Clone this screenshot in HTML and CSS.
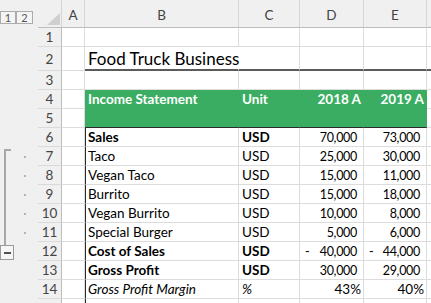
FILE: index.html
```html
<!DOCTYPE html>
<html lang="en">
<head>
    <meta charset="UTF-8">
    <title>Food Truck Business</title>
    <link rel="stylesheet" href="styles.css">
</head>
<body>
<div class="window">
    <!-- outline gutter: level buttons and the group bracket -->
    <div class="gutter">
        <div class="level first">1</div>
        <div class="level">2</div>
        <div class="bracket"></div>
        <div class="dots">
            <span class="dot"></span>
            <span class="dot"></span>
            <span class="dot"></span>
            <span class="dot"></span>
            <span class="dot"></span>
        </div>
        <div class="collapse"><span></span></div>
    </div>

    <div class="sheet">
        <div class="row">
            <div class="cell corner">
                <svg width="13" height="12" viewBox="0 0 13 12"><polygon points="13,0 13,12 0,12" fill="#cfcfcf"/></svg>
            </div>
            <div class="cell col-head">A</div>
            <div class="cell col-head">B</div>
            <div class="cell col-head">C</div>
            <div class="cell col-head">D</div>
            <div class="cell col-head">E</div>
            <div class="cell col-head"></div>
        </div>

        <div class="row">
            <div class="cell row-head">1</div>
            <div class="cell"></div><div class="cell"></div><div class="cell"></div>
            <div class="cell"></div><div class="cell"></div><div class="cell"></div>
        </div>

        <div class="row">
            <div class="cell row-head">2</div>
            <div class="cell"></div>
            <div class="cell title rule">Food Truck Business</div>
            <div class="cell rule"></div><div class="cell rule"></div>
            <div class="cell rule"></div><div class="cell rule"></div>
        </div>

        <div class="row">
            <div class="cell row-head">3</div>
            <div class="cell"></div><div class="cell"></div><div class="cell"></div>
            <div class="cell"></div><div class="cell"></div><div class="cell"></div>
        </div>

        <div class="row">
            <div class="cell row-head">4</div>
            <div class="cell"></div>
            <div class="cell fill">Income Statement</div>
            <div class="cell fill">Unit</div>
            <div class="cell fill right">2018 A</div>
            <div class="cell fill right">2019 A</div>
            <div class="cell"></div>
        </div>

        <div class="row">
            <div class="cell row-head">5</div>
            <div class="cell"></div>
            <div class="cell fill under"></div>
            <div class="cell fill under"></div>
            <div class="cell fill under"></div>
            <div class="cell fill under"></div>
            <div class="cell"></div>
        </div>

        <div class="row">
            <div class="cell row-head">6</div>
            <div class="cell"></div>
            <div class="cell label bold">Sales</div>
            <div class="cell bold">USD</div>
            <div class="cell num">70,000</div>
            <div class="cell num">73,000</div>
            <div class="cell"></div>
        </div>

        <div class="row">
            <div class="cell row-head">7</div>
            <div class="cell"></div>
            <div class="cell label">Taco</div>
            <div class="cell">USD</div>
            <div class="cell num">25,000</div>
            <div class="cell num">30,000</div>
            <div class="cell"></div>
        </div>

        <div class="row">
            <div class="cell row-head">8</div>
            <div class="cell"></div>
            <div class="cell label">Vegan Taco</div>
            <div class="cell">USD</div>
            <div class="cell num">15,000</div>
            <div class="cell num">11,000</div>
            <div class="cell"></div>
        </div>

        <div class="row">
            <div class="cell row-head">9</div>
            <div class="cell"></div>
            <div class="cell label">Burrito</div>
            <div class="cell">USD</div>
            <div class="cell num">15,000</div>
            <div class="cell num">18,000</div>
            <div class="cell"></div>
        </div>

        <div class="row">
            <div class="cell row-head">10</div>
            <div class="cell"></div>
            <div class="cell label">Vegan Burrito</div>
            <div class="cell">USD</div>
            <div class="cell num">10,000</div>
            <div class="cell num">8,000</div>
            <div class="cell"></div>
        </div>

        <div class="row">
            <div class="cell row-head">11</div>
            <div class="cell"></div>
            <div class="cell label">Special Burger</div>
            <div class="cell">USD</div>
            <div class="cell num">5,000</div>
            <div class="cell num">6,000</div>
            <div class="cell"></div>
        </div>

        <div class="row">
            <div class="cell row-head">12</div>
            <div class="cell"></div>
            <div class="cell label bold">Cost of Sales</div>
            <div class="cell bold">USD</div>
            <div class="cell num neg"><span>-</span><span>40,000</span></div>
            <div class="cell num neg"><span>-</span><span>44,000</span></div>
            <div class="cell"></div>
        </div>

        <div class="row">
            <div class="cell row-head">13</div>
            <div class="cell"></div>
            <div class="cell label bold">Gross Profit</div>
            <div class="cell bold">USD</div>
            <div class="cell num">30,000</div>
            <div class="cell num">29,000</div>
            <div class="cell"></div>
        </div>

        <div class="row">
            <div class="cell row-head">14</div>
            <div class="cell"></div>
            <div class="cell label italic">Gross Profit Margin</div>
            <div class="cell italic">%</div>
            <div class="cell right">43%</div>
            <div class="cell right">40%</div>
            <div class="cell"></div>
        </div>

        <div class="row">
            <div class="cell row-head"></div>
            <div class="cell"></div>
            <div class="cell label"></div>
            <div class="cell"></div><div class="cell"></div>
            <div class="cell"></div><div class="cell"></div>
        </div>
    </div>
</div>
</body>
</html>
```

FILE: styles.css
```css
body {
    margin: 0;
    background: #ffffff;
    font-family: Lato, "Open Sans", sans-serif;
    overflow: hidden;
}

.window {
    display: flex;
    height: 303px;
    overflow: hidden;
}

/* outline gutter */

.gutter {
    width: 38px;
    flex-shrink: 0;
    background: #f0f0f0;
    display: grid;
    grid-template-columns: 16px 17px 5px;
    grid-template-rows: 28px 19px 24px repeat(13, 19px);
}

.level {
    grid-row: 1;
    align-self: end;
    margin-bottom: 4px;
    height: 13px;
    border: 1px solid #ababab;
    box-sizing: border-box;
    background: #f4f4f4;
    color: #555;
    font-size: 11px;
    line-height: 11px;
    text-align: center;
}

.bracket {
    grid-column: 1;
    grid-row: 8 / 14;
    margin: 2px 0 16px 4px;
    border-left: 2px solid #a8a8a8;
    border-top: 2px solid #a8a8a8;
    width: 5px;
}

.dots {
    grid-column: 2;
    grid-row: 8 / 13;
    display: grid;
    grid-template-rows: repeat(5, 19px);
    justify-items: center;
    align-items: center;
}

.dot {
    width: 2px;
    height: 2px;
    background: #b4b4b4;
}

.collapse {
    grid-column: 1;
    grid-row: 13;
    align-self: end;
    margin-bottom: 1px;
    width: 14px;
    height: 15px;
    box-sizing: border-box;
    border: 1px solid #9a9a9a;
    background: #f6f6f6;
    display: flex;
    align-items: center;
    justify-content: center;
}

.collapse span {
    width: 7px;
    height: 2px;
    background: #505050;
}

/* sheet grid */

.sheet {
    flex: 1;
    display: grid;
    grid-template-columns: 24px 23px 154px 61px 64px 63px 1fr;
    grid-template-rows: 28px 19px 24px repeat(13, 19px);
}

.row {
    display: contents;
}

.cell {
    box-sizing: border-box;
    border-right: 1px solid #dcdcdc;
    border-bottom: 1px solid #dcdcdc;
    display: flex;
    align-items: center;
    padding: 0 3px;
    min-width: 0;
    white-space: nowrap;
    font-size: 13.5px;
    color: #000;
}

.corner {
    background: #f0f0f0;
    border-bottom: 1px solid #bdbdbd;
    border-right-color: #d4d4d4;
    align-items: flex-end;
    justify-content: flex-end;
    padding: 0 1px 2px 0;
}

.col-head {
    background: #f0f0f0;
    border-bottom: 1px solid #bdbdbd;
    border-right-color: #d6d6d6;
    justify-content: center;
    color: #444;
    padding-top: 2px;
}

.row-head {
    background: #f0f0f0;
    border-right-color: #bdbdbd;
    border-bottom-color: #dadada;
    justify-content: center;
    color: #444;
}

.title {
    font-size: 17px;
    border-right-color: transparent;
    overflow: visible;
}

.rule {
    border-bottom: 2px solid #5b5b5b;
}

.fill {
    background: #3aad62;
    border-right-color: #3aad62;
    border-bottom-color: #3aad62;
    color: #ffffff;
    font-weight: bold;
}

.fill.under {
    border-bottom-color: #2b2b2b;
}

.label {
    border-left: 1px solid #2b2b2b;
    padding-left: 2px;
}

.bold {
    font-weight: bold;
}

.italic {
    font-style: italic;
}

.right {
    justify-content: flex-end;
    padding-right: 2px;
}

.num {
    justify-content: flex-end;
    padding-right: 6px;
    font-size: 12.5px;
    letter-spacing: -0.3px;
}

.num.neg {
    justify-content: space-between;
    padding-left: 5px;
}
```
